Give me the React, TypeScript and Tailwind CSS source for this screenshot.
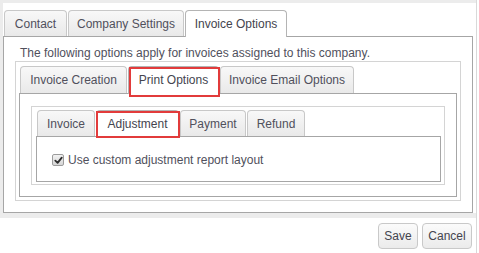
import clsx from "clsx";

type TabDef = {
  label: string;
  width: string;
  active?: boolean;
  mark?: string;
};

const Tab = ({ tab, height, activeHeight }: { tab: TabDef; height: string; activeHeight: string }) => (
  <div
    className={clsx(
      "relative flex items-center justify-center rounded-t-[4px] border border-b-0 whitespace-nowrap",
      tab.width,
      tab.active
        ? clsx("z-10 -mb-px pb-px bg-white border-[#b4b4b4] text-[#44444e]", activeHeight)
        : clsx("bg-linear-to-b from-[#f8f8f8] to-[#e9e9e9] border-[#c8c8c8]", height)
    )}
  >
    {tab.label}
    {/* red annotation box drawn over the tab */}
    {tab.mark && (
      <span
        className={clsx(
          "pointer-events-none absolute border-2 border-[#e23b3b]",
          tab.mark
        )}
      />
    )}
  </div>
);

const TabNav = ({
  tabs,
  height,
  activeHeight,
  className,
}: {
  tabs: TabDef[];
  height: string;
  activeHeight: string;
  className?: string;
}) => (
  <div className={clsx("flex items-end gap-px pl-px", className)}>
    {tabs.map((t) => (
      <Tab key={t.label} tab={t} height={height} activeHeight={activeHeight} />
    ))}
  </div>
);

const topTabs: TabDef[] = [
  { label: "Contact", width: "w-[63px]" },
  { label: "Company Settings", width: "w-[116px]" },
  { label: "Invoice Options", width: "w-[102px]", active: true },
];

const invoiceTabs: TabDef[] = [
  { label: "Invoice Creation", width: "w-[107px]" },
  {
    label: "Print Options",
    width: "w-[91px]",
    active: true,
    mark: "left-0 top-0 h-[30px] w-[91px]",
  },
  { label: "Invoice Email Options", width: "w-[134px]" },
];

const printTabs: TabDef[] = [
  { label: "Invoice", width: "w-[58px]" },
  {
    label: "Adjustment",
    width: "w-[83px]",
    active: true,
    mark: "-left-px top-0 h-[27px] w-[84px]",
  },
  { label: "Payment", width: "w-[66px]" },
  { label: "Refund", width: "w-[58px]" },
];

export default function App() {
  return (
    <div className="h-[253px] w-[477px] border-r border-[#d9d9d9] bg-white font-['Liberation_Sans',Arial,sans-serif] text-[12px] text-[#50505c]">
      {/* Outer frame */}
      <div className="border-t-[3px] border-l-[3px] border-b-[5px] border-[#ececec]">
        <TabNav tabs={topTabs} height="h-[26px]" activeHeight="h-[27px]" className="h-[33px]" />

        <div className="w-[470px] border border-[#a6a6a6] px-[11px] pt-[8px] pb-[11px]">
          <p className="pl-[5px] leading-[16px]">
            The following options apply for invoices assigned to this company.
          </p>

          {/* Invoice options tabs */}
          <div className="border border-[#d4d4d4] p-[3px]">
            <TabNav tabs={invoiceTabs} height="h-[27px]" activeHeight="h-[28px]" className="pt-px" />

            <div className="border border-[#a6a6a6] px-[11px] pt-[12px] pb-[11px]">
              {/* Print options tabs */}
              <div className="border border-[#d4d4d4] pt-[3px] pl-[4px] pr-[3px] pb-[2px]">
                <TabNav tabs={printTabs} height="h-[26px]" activeHeight="h-[27px]" />

                <div className="h-[46px] border border-[#a6a6a6] pl-[15px] pt-[16px]">
                  <label className="flex h-[14px] items-center gap-[4px]">
                    <span className="flex h-[12px] w-[12px] items-center justify-center rounded-[2px] border border-[#9c9c9c] bg-linear-to-b from-[#f2f2f2] to-[#d6d6d6]">
                      <svg viewBox="0 0 10 10" className="h-[9px] w-[9px]">
                        <path
                          d="M1.5 5.2 L4 7.6 L8.6 1.8"
                          fill="none"
                          stroke="#2e2e2e"
                          strokeWidth="2"
                          strokeLinecap="round"
                          strokeLinejoin="round"
                        />
                      </svg>
                    </span>
                    <span className="leading-[14px]">Use custom adjustment report layout</span>
                  </label>
                </div>
              </div>
            </div>
          </div>
        </div>
      </div>

      {/* Footer buttons */}
      <div className="mt-[5px] flex justify-end gap-[4px] pr-[4px]">
        <button className="h-[26px] w-[40px] rounded-[4px] border border-[#c9c9c9] bg-linear-to-b from-[#fbfbfb] to-[#ebebeb] text-[12px] text-[#44444e]">
          Save
        </button>
        <button className="h-[26px] w-[50px] rounded-[4px] border border-[#c9c9c9] bg-linear-to-b from-[#fbfbfb] to-[#ebebeb] text-[12px] text-[#44444e]">
          Cancel
        </button>
      </div>
    </div>
  );
}
